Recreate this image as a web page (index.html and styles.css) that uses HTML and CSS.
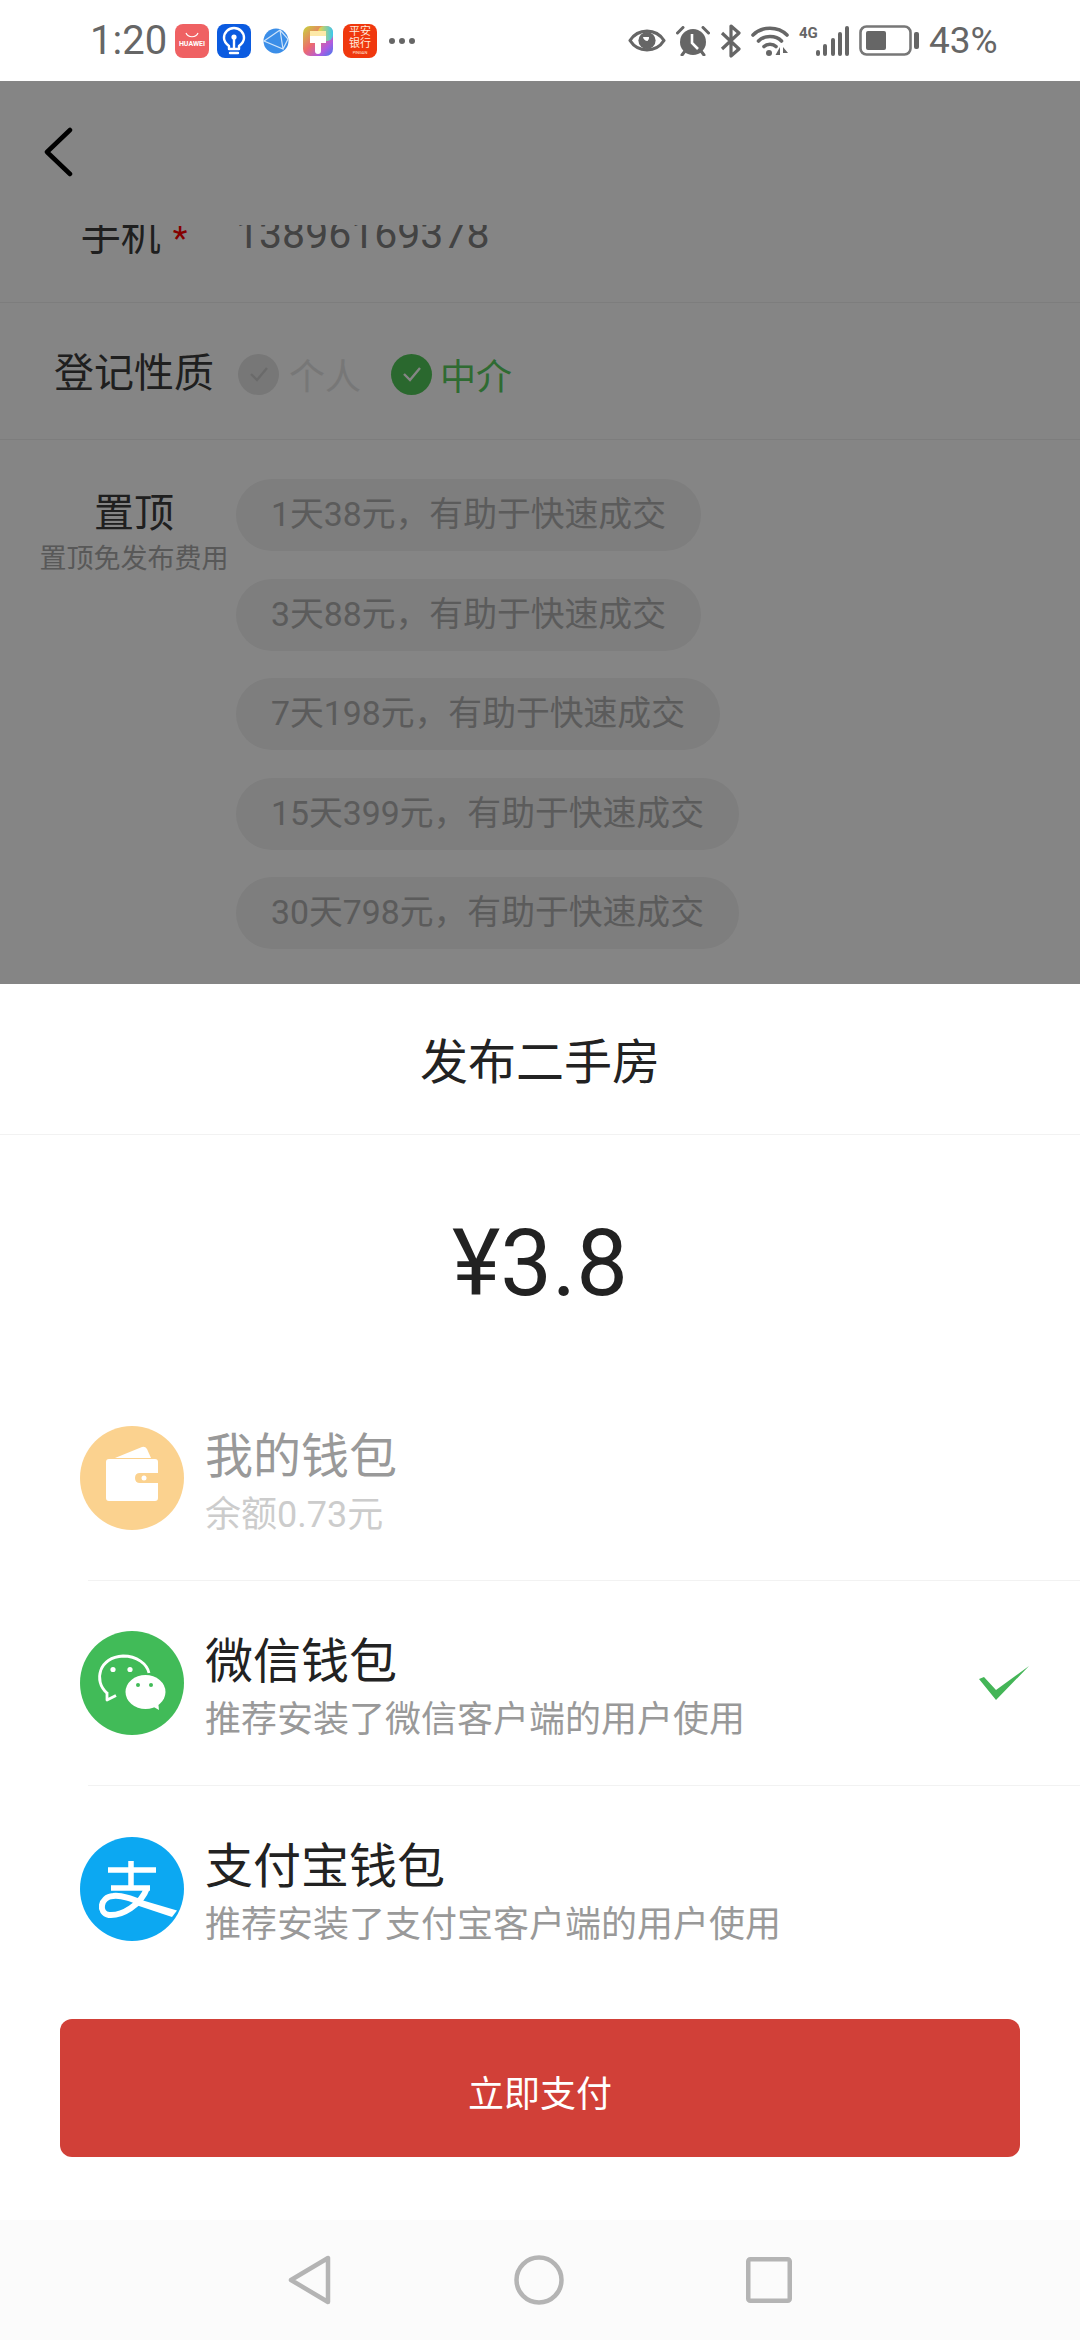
FILE: index.html
```html
<!DOCTYPE html>
<html lang="zh-CN">
<head>
  <meta charset="UTF-8">
  <title>发布二手房</title>
  <link rel="stylesheet" href="styles.css">
</head>
<body>

<div class="status-bar">
  <span class="clock">1:20</span>
  <div class="apps">
    <div class="app app-huawei">
      <svg width="14" height="7" viewBox="0 0 14 7"><path d="M1 1 C3 6 11 6 13 1" fill="none" stroke="#fff" stroke-width="1.2"/></svg>
      <span>HUAWEI</span>
    </div>
    <div class="app app-bulb">
      <svg width="34" height="34" viewBox="0 0 34 34">
        <path d="M12 22 C8 19 7 16 7 14 A10 10 0 0 1 27 14 C27 16 26 19 22 22 L22 25 L12 25 Z" fill="none" stroke="#fff" stroke-width="2.4" stroke-linejoin="round"/>
        <path d="M13 29 H21" stroke="#fff" stroke-width="2.4" stroke-linecap="round"/>
        <path d="M17 24 V15" stroke="#fff" stroke-width="2.4"/>
        <circle cx="17" cy="13" r="2.6" fill="#fff"/>
      </svg>
    </div>
    <div class="app">
      <svg width="26" height="26" viewBox="0 0 26 26">
        <circle cx="13" cy="13" r="12.5" fill="#3b8ee8"/>
        <path d="M17 2 L20 21 L1 13 L17 2 M20 21 L25 11 L17 2" fill="none" stroke="#cfe4fa" stroke-width="1.2"/>
      </svg>
    </div>
    <div class="app">
      <svg width="30" height="30" viewBox="0 0 30 30">
        <defs>
          <linearGradient id="brushBg" x1="0" y1="0" x2="1" y2="1">
            <stop offset="0" stop-color="#c6d73a"/>
            <stop offset=".45" stop-color="#ee6a6e"/>
            <stop offset=".75" stop-color="#b05be0"/>
            <stop offset="1" stop-color="#3f7cf0"/>
          </linearGradient>
          <linearGradient id="brushTop" x1="0" y1="0" x2="1" y2="0">
            <stop offset="0" stop-color="#f5d33d"/>
            <stop offset="1" stop-color="#38c8ee"/>
          </linearGradient>
        </defs>
        <rect width="30" height="30" rx="7" fill="url(#brushBg)"/>
        <rect x="15" width="15" height="15" rx="6" fill="url(#brushTop)"/>
        <path d="M7 5 H23 V17 H18 V25 A3 3 0 0 1 12 25 V17 H7 Z" fill="#fff"/>
        <rect x="7" y="5" width="16" height="5" fill="#fde9a8"/>
      </svg>
    </div>
    <div class="app app-bank"><span>平安</span><span>银行</span><i>PINGAN</i></div>
    <div class="more"><b></b><b></b><b></b></div>
  </div>

  <div class="sys-icons">
    <svg width="38" height="25" viewBox="0 0 38 25">
      <path d="M2 12.5 C10 0 28 0 36 12.5 C28 25 10 25 2 12.5 Z" fill="none" stroke="#666" stroke-width="3.2" stroke-linejoin="round"/>
      <circle cx="19" cy="12.5" r="8.6" fill="#666"/>
      <path d="M15 9 A5 5 0 0 0 19.5 13 A4 4 0 0 0 21 9 Z" fill="#fff"/>
    </svg>
    <svg width="34" height="30" viewBox="0 0 34 30">
      <circle cx="17" cy="16" r="13" fill="#666"/>
      <path d="M16 8 V17 L22 23" fill="none" stroke="#fff" stroke-width="2.6"/>
      <path d="M1.5 7 L7 1.5 M32.5 7 L27 1.5 M6 29 L9 25 M28 29 L25 25" stroke="#666" stroke-width="3" stroke-linecap="round"/>
    </svg>
    <svg width="21" height="34" viewBox="0 0 21 34">
      <path d="M2 9 L19 25 L11 32 V2 L19 9 L2 25" fill="none" stroke="#666" stroke-width="3.2" stroke-linejoin="round"/>
    </svg>
    <svg width="38" height="30" viewBox="0 0 38 30">
      <path d="M2 9 C11 0 27 0 36 9" fill="none" stroke="#666" stroke-width="3.6" stroke-linecap="round"/>
      <path d="M7.5 15 C13 9 25 9 30.5 15" fill="none" stroke="#666" stroke-width="3.6" stroke-linecap="round"/>
      <path d="M13 20.5 C16 17.5 22 17.5 25 20.5" fill="none" stroke="#666" stroke-width="3.6" stroke-linecap="round"/>
      <circle cx="18" cy="27" r="3" fill="#666"/>
      <path d="M29 21 V29 L24.5 29 Z M32 21 L37 27 H32 Z" fill="#666"/>
    </svg>
    <div class="signal">
      <span class="net">4G</span>
      <svg width="33" height="30" viewBox="0 0 33 30">
        <rect x="0" y="24" width="4" height="6" rx="2" fill="#666"/>
        <rect x="7" y="18" width="4" height="12" rx="2" fill="#666"/>
        <rect x="15" y="12" width="4" height="18" rx="2" fill="#666"/>
        <rect x="22" y="6" width="4" height="24" rx="2" fill="#666"/>
        <rect x="29" y="0" width="4" height="30" rx="2" fill="#666"/>
      </svg>
    </div>
    <svg width="60" height="31" viewBox="0 0 60 31">
      <rect x="1.5" y="1.5" width="50" height="28" rx="6" fill="none" stroke="#777" stroke-width="2.6"/>
      <rect x="7" y="6" width="20" height="19" rx="2" fill="#666"/>
      <rect x="55" y="7" width="5" height="17" rx="2" fill="#666"/>
    </svg>
    <span class="percent">43%</span>
  </div>
</div>

<div class="form-area">
  <div class="top-bar">
    <svg width="30" height="52" viewBox="0 0 30 52">
      <path d="M26 4 L3 26 L26 48" fill="none" stroke="#000" stroke-width="4.5" stroke-linecap="round" stroke-linejoin="round"/>
    </svg>
  </div>
  <div class="scroll">
    <div class="form-row phone-row">
      <div class="field-label">手机<em>*</em></div>
      <div class="phone">13896169378</div>
    </div>
    <div class="form-row">
      <div class="field-label">登记性质</div>
      <div class="options">
        <div class="tick tick-off"><svg width="20" height="16" viewBox="0 0 20 16"><path d="M2 8 L8 14 L18 2" fill="none" stroke="#ccc" stroke-width="2.4"/></svg></div>
        <span class="opt-off">个人</span>
        <div class="tick tick-on"><svg width="20" height="16" viewBox="0 0 20 16"><path d="M2 8 L8 14 L18 2" fill="none" stroke="#fff" stroke-width="2.4"/></svg></div>
        <span class="opt-on">中介</span>
      </div>
    </div>
    <div class="form-row top-row">
      <div class="field-label">置顶<small>置顶免发布费用</small></div>
      <div class="pills">
        <div class="pill">1天38元，有助于快速成交</div>
        <div class="pill">3天88元，有助于快速成交</div>
        <div class="pill">7天198元，有助于快速成交</div>
        <div class="pill">15天399元，有助于快速成交</div>
        <div class="pill">30天798元，有助于快速成交</div>
      </div>
    </div>
  </div>
  <div class="dim"></div>
</div>

<div class="sheet">
  <div class="sheet-title">发布二手房</div>
  <div class="price">¥3.8</div>

  <div class="pay-list">
    <div class="pay-row">
      <svg class="pay-icon" width="104" height="104" viewBox="0 0 104 104">
        <circle cx="52" cy="52" r="52" fill="#fbd28f"/>
        <path d="M35 32 L62 21 Q65 20 67 23 L71 32 Z" fill="#fff"/>
        <path d="M29 33 H75 Q78 33 78 36 V47 H60 Q55 47 55 52 Q55 57 60 57 H78 V72 Q78 75 75 75 H29 Q26 75 26 72 V36 Q26 33 29 33 Z" fill="#fff"/>
        <circle cx="64" cy="52" r="2.5" fill="#fff"/>
      </svg>
      <div class="pay-text">
        <div class="pay-name muted">我的钱包</div>
        <div class="pay-desc faint">余额0.73元</div>
      </div>
    </div>
    <div class="pay-row">
      <svg class="pay-icon" width="104" height="104" viewBox="0 0 104 104">
        <circle cx="52" cy="52" r="52" fill="#41bb58"/>
        <path d="M27 62 C13 50 19 26 43 25 C57 25 67 33 69 42" fill="none" stroke="#fff" stroke-width="2.8"/>
        <path d="M27 61 L27 69 L36 64.5" fill="none" stroke="#fff" stroke-width="2.8" stroke-linejoin="round"/>
        <ellipse cx="65.5" cy="61" rx="20" ry="17" fill="#fff"/>
        <path d="M72 75 L79 79 L78 70 Z" fill="#fff"/>
        <circle cx="33" cy="38.5" r="2.6" fill="#fff"/>
        <circle cx="50" cy="38.5" r="2.6" fill="#fff"/>
        <circle cx="58" cy="54" r="2" fill="#41bb58"/>
        <circle cx="71" cy="54" r="2" fill="#41bb58"/>
      </svg>
      <div class="pay-text">
        <div class="pay-name">微信钱包</div>
        <div class="pay-desc">推荐安装了微信客户端的用户使用</div>
      </div>
      <svg class="pay-check" width="50" height="34" viewBox="0 0 50 34">
        <path d="M0 13 L5 11 L17 24 L50 0 L17 34 Z" fill="#44b557"/>
      </svg>
    </div>
    <div class="pay-row">
      <svg class="pay-icon" width="104" height="104" viewBox="0 0 104 104">
        <circle cx="52" cy="52" r="52" fill="#0ca8f2"/>
        <path d="M28 33 H76 M31 51 H70 M51 24 V51" fill="none" stroke="#fff" stroke-width="5.5"/>
        <path d="M67 51 C61 68 42 79 29 78 C18 76 20 60 33 59 C42 58 52 62 62 66" fill="none" stroke="#fff" stroke-width="6"/>
        <path d="M58 62 L97 73.5 L92 80 L56 68 Z" fill="#fff"/>
      </svg>
      <div class="pay-text">
        <div class="pay-name">支付宝钱包</div>
        <div class="pay-desc">推荐安装了支付宝客户端的用户使用</div>
      </div>
    </div>
  </div>

  <button class="pay-btn">立即支付</button>
</div>

<div class="nav-bar">
  <svg width="44" height="50" viewBox="0 0 44 50">
    <path d="M40 3 V47 L3 25 Z" fill="none" stroke="#b4b4b4" stroke-width="4.5" stroke-linejoin="round"/>
  </svg>
  <svg width="50" height="50" viewBox="0 0 50 50">
    <circle cx="25" cy="25" r="22.5" fill="none" stroke="#b4b4b4" stroke-width="4.5"/>
  </svg>
  <svg width="46" height="46" viewBox="0 0 46 46">
    <rect x="2.25" y="2.25" width="41.5" height="41.5" rx="2" fill="none" stroke="#b4b4b4" stroke-width="4.5"/>
  </svg>
</div>

</body>
</html>
```

FILE: styles.css
```css
* {
  box-sizing: border-box;
}

body {
  margin: 0;
  width: 1080px;
  height: 2340px;
  display: flex;
  flex-direction: column;
  overflow: hidden;
  background: white;
  color: #222;
  font-family: Roboto, 'Noto Sans CJK SC', sans-serif;
}

/* status bar */
.status-bar {
  height: 81px;
  display: flex;
  align-items: center;
  padding: 0 85px 0 90px;
  color: #666;
}

.clock {
  font-size: 40px;
  width: 85px;
}

.apps {
  display: flex;
  align-items: center;
  gap: 8px;
}

.app {
  width: 34px;
  height: 34px;
  border-radius: 8px;
  display: flex;
  flex-direction: column;
  align-items: center;
  justify-content: center;
}

.app-huawei {
  background: #ef6163;
  color: white;
  font-size: 7px;
  font-weight: 700;
  line-height: 10px;
}

.app-bulb {
  background: #0b5be0;
}

.app-bank {
  background: #f0380e;
  color: #ffe9dc;
  font-size: 11px;
  line-height: 12px;
}

.app-bank i {
  font-size: 4px;
  line-height: 6px;
  font-style: normal;
}

.more {
  display: flex;
  gap: 4px;
  width: 34px;
  justify-content: center;
}

.more b {
  width: 6px;
  height: 6px;
  border-radius: 50%;
  background: #666;
}

.sys-icons {
  margin-left: auto;
  display: flex;
  align-items: center;
  gap: 10px;
}

.signal {
  display: flex;
  align-items: flex-start;
}

.net {
  width: 17px;
  font-size: 15px;
  line-height: 15px;
  font-weight: 700;
}

.percent {
  font-size: 37px;
  width: 66px;
  white-space: nowrap;
}

/* dimmed form behind the sheet */
.form-area {
  position: relative;
  height: 903px;
  overflow: hidden;
}

.dim {
  position: absolute;
  inset: 0;
  z-index: 2;
  background: rgba(0, 0, 0, 0.48);
}

.top-bar {
  height: 144px;
  padding: 45px 0 0 44px;
  background: white;
  position: relative;
  z-index: 1;
}

.scroll {
  margin-top: -59px;
}

.form-row {
  min-height: 137px;
  display: flex;
  align-items: center;
  border-bottom: 1px solid #efefef;
}

.field-label {
  width: 236px;
  padding-left: 32px;
  padding-bottom: 2px;
  text-align: center;
  font-size: 40px;
  flex: none;
  color: #3c3c3c;
}

.field-label em {
  color: #f00;
  font-style: normal;
  font-size: 34px;
  margin-left: 12px;
}

.field-label small {
  display: block;
  font-size: 27px;
  line-height: 40px;
  color: #aaa;
}

.phone {
  font-size: 41px;
  color: #808080;
}

.options {
  display: flex;
  align-items: center;
  margin-top: 6px;
  font-size: 36px;
  padding-left: 2px;
}

.tick {
  width: 41px;
  height: 41px;
  border-radius: 50%;
  display: flex;
  align-items: center;
  justify-content: center;
  margin-right: 10px;
}

.tick-off {
  background: #e4e4e4;
}

.tick-on {
  background: #52c858;
  margin-right: 8px;
}

.opt-off {
  color: #e4e4e4;
  margin-right: 30px;
}

.opt-on {
  color: #5ace60;
}

.top-row {
  align-items: flex-start;
  padding-top: 39px;
  border-bottom: none;
}

.top-row .field-label {
  padding-top: 2px;
}

.pills {
  display: flex;
  flex-direction: column;
  align-items: flex-start;
  gap: 27.6px;
}

.pill {
  height: 72px;
  line-height: 72px;
  padding: 0 35px;
  border-radius: 36px;
  font-size: 33.8px;
  background: #f1f1f1;
  color: #aeaeae;
}

/* pay sheet */
.sheet {
  flex: 1;
  display: flex;
  flex-direction: column;
  position: relative;
}

.sheet-title {
  height: 151px;
  padding-top: 4px;
  line-height: 150px;
  text-align: center;
  font-size: 48px;
  border-bottom: 1px solid #f2f2f2;
}

.price {
  height: 241px;
  padding-top: 16px;
  display: flex;
  align-items: center;
  justify-content: center;
  font-size: 92px;
}

.pay-row {
  height: 205px;
  margin-left: 88px;
  padding-right: 51px;
  display: flex;
  align-items: center;
  border-bottom: 1px solid #f2f2f2;
}

.pay-row:last-child {
  border-bottom: none;
}

.pay-icon {
  margin-left: -8px;
  margin-right: 21px;
  flex: none;
}

.pay-text {
  flex: 1;
  padding-top: 10px;
}

.pay-name {
  font-size: 48px;
  line-height: 60px;
}

.pay-desc {
  font-size: 36px;
  line-height: 50px;
  margin-top: 3px;
  color: #999;
}

.muted {
  color: #999;
}

.faint {
  color: #ccc;
}

.pay-btn {
  display: block;
  margin: 28px 60px 0;
  height: 138px;
  width: 960px;
  padding-top: 6px;
  border: none;
  border-radius: 12px;
  background: #d14038;
  color: white;
  font-family: inherit;
  font-size: 36px;
}

.nav-bar {
  height: 120px;
  background: #fbfbfb;
  display: flex;
  align-items: center;
  justify-content: center;
  gap: 182px;
}
```
